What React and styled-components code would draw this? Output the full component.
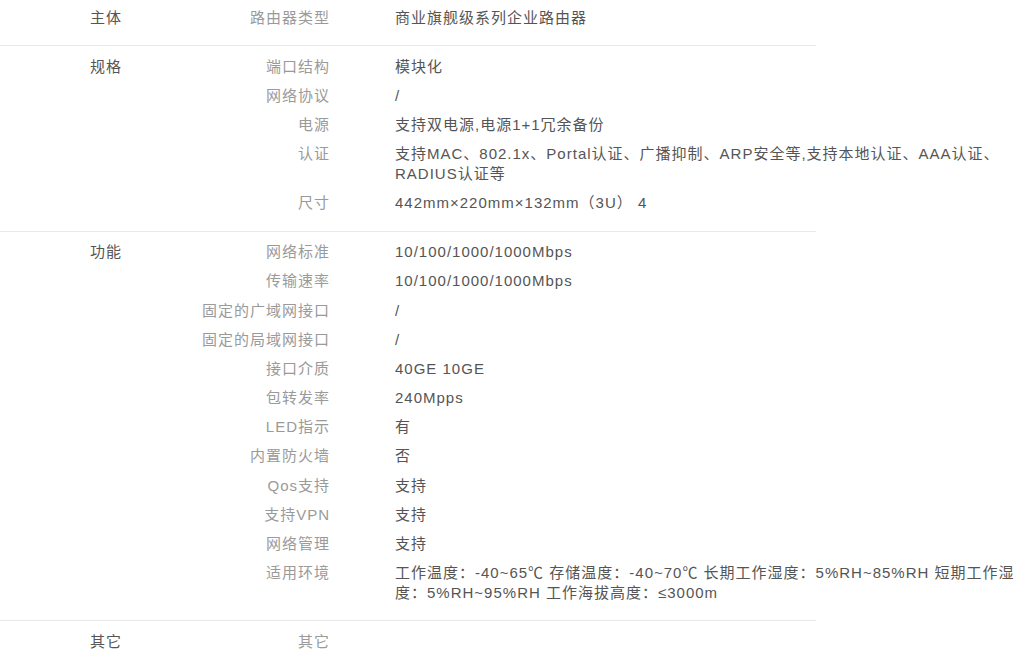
import React from 'react';
import styled, { createGlobalStyle } from 'styled-components';

const GlobalStyle = createGlobalStyle`
    body {
        margin: 0;
        background: #fff;
        font-family: "Liberation Sans", "Noto Sans CJK SC", sans-serif;
    }
`

const Sheet = styled.div`
    width: 816px;
`

const Section = styled.section`
    display: flex;
    padding: ${props => props.first ? '8px' : '10.5px'} 0 8px 90px;
    border-bottom: 1px solid #e8e8e8;
    font-size: 15px;
    line-height: 20px;
    letter-spacing: 1px;
`

const GroupName = styled.div`
    width: 100px;
    flex-shrink: 0;
    color: #555;
`

const Rows = styled.div`
    display: flex;
    flex-direction: column;
`

const Row = styled.div`
    display: flex;
    margin-bottom: 9.2px;
`

const Key = styled.div`
    width: 140px;
    flex-shrink: 0;
    text-align: right;
    color: #9a9a9a;
`

const Value = styled.div`
    width: 620px;
    flex-shrink: 0;
    margin-left: 65px;
    color: #555;
`

const specs = [
    {
        group: '主体',
        rows: [['路由器类型', '商业旗舰级系列企业路由器']],
    },
    {
        group: '规格',
        rows: [
            ['端口结构', '模块化'],
            ['网络协议', '/'],
            ['电源', '支持双电源,电源1+1冗余备份'],
            ['认证', '支持MAC、802.1x、Portal认证、广播抑制、ARP安全等,支持本地认证、AAA认证、RADIUS认证等'],
            ['尺寸', '442mm×220mm×132mm（3U） 4'],
        ],
    },
    {
        group: '功能',
        rows: [
            ['网络标准', '10/100/1000/1000Mbps'],
            ['传输速率', '10/100/1000/1000Mbps'],
            ['固定的广域网接口', '/'],
            ['固定的局域网接口', '/'],
            ['接口介质', '40GE 10GE'],
            ['包转发率', '240Mpps'],
            ['LED指示', '有'],
            ['内置防火墙', '否'],
            ['Qos支持', '支持'],
            ['支持VPN', '支持'],
            ['网络管理', '支持'],
            ['适用环境', '工作温度：-40~65℃ 存储温度：-40~70℃ 长期工作湿度：5%RH~85%RH 短期工作湿度：5%RH~95%RH 工作海拔高度：≤3000m'],
        ],
    },
    {
        group: '其它',
        rows: [['其它', '']],
    },
];

export default () => {
    return (
        <Sheet>
            <GlobalStyle />
            {specs.map((s, i) => (
                <Section key={s.group} first={i === 0}>
                    <GroupName>{s.group}</GroupName>
                    <Rows>
                        {s.rows.map(([k, v]) => (
                            <Row key={k}>
                                <Key>{k}</Key>
                                <Value>{v}</Value>
                            </Row>
                        ))}
                    </Rows>
                </Section>
            ))}
        </Sheet>
    )
}
